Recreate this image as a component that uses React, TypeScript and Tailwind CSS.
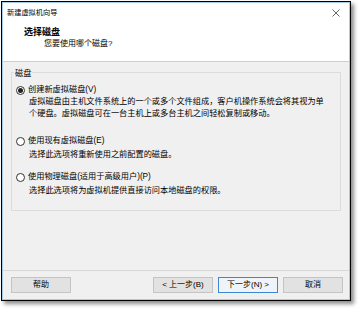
import React from "react";

const font = "font-['Liberation_Sans','Noto_Sans_CJK_SC',sans-serif]";

function Radio({ checked = false }: { checked?: boolean }) {
  return (
    <span className="flex h-[9px] w-[9px] shrink-0 items-center justify-center rounded-full border border-[#333] bg-white">
      {checked && <span className="h-[5px] w-[5px] rounded-full bg-[#222]" />}
    </span>
  );
}

function Option({
  label,
  checked,
  lines,
  descGap = "mt-0",
  className = "",
}: {
  label: string;
  checked?: boolean;
  lines: string[];
  descGap?: string;
  className?: string;
}) {
  return (
    <div className={className}>
      <div className="flex h-[12px] items-center gap-[3px] pl-[4px]">
        <Radio checked={checked} />
        <span className="leading-[12px]">{label}</span>
      </div>
      <div className={["pl-[17px]", descGap].join(" ")}>
        {lines.map((l) => (
          <div key={l} className="h-[12px] leading-[12px] whitespace-nowrap">
            {l}
          </div>
        ))}
      </div>
    </div>
  );
}

function Btn({
  children,
  primary = false,
  className = "",
}: React.PropsWithChildren<{ primary?: boolean; className?: string }>) {
  return (
    <div
      className={[
        "flex h-[16px] w-[60px] items-center justify-center border text-[8px] leading-none",
        primary
          ? "border-[#3c87d0] bg-[#eef4fa]"
          : "border-[#c4c4c4] bg-[#e2e2e2]",
        className,
      ].join(" ")}
    >
      {children}
    </div>
  );
}

export default function App() {
  return (
    <div className={["h-[309px] w-[359px] bg-white pl-[1px] pt-[1px] text-black", font].join(" ")}>
      <div className="h-[300px] w-[350px] border border-black shadow-[3px_3px_4px_rgba(0,0,0,0.45)]">
        <div className="flex h-full flex-col border border-[#a8cbe6]">
          {/* header */}
          <div className="h-[59px] border-b border-[#cfcfcf] bg-white">
            <div className="flex h-[20px] items-center justify-between pl-[4px] pr-[9px]">
              <span className="text-[7.2px]">新建虚拟机向导</span>
              <svg width="8" height="8" viewBox="0 0 8 8">
                <path d="M0.5 0.5 L7.5 7.5 M7.5 0.5 L0.5 7.5" stroke="#555" strokeWidth="0.9" />
              </svg>
            </div>
            <div className="mt-[3px] pl-[21px] text-[9px] font-bold leading-[12px]">选择磁盘</div>
            <div className="pl-[41px] text-[8px] leading-[12px]">您要使用哪个磁盘?</div>
          </div>

          {/* body */}
          <div className="flex flex-1 flex-col bg-[#f0f0f0] text-[8.2px]">
            <div className="relative mx-[8px] mt-[10px] border border-[#dcdcdc] pb-[13px] pt-[11px] pr-[4px]">
              <span className="absolute left-[2px] top-[-5px] bg-[#f0f0f0] px-[1px] leading-[12px]">磁盘</span>
              <Option
                label="创建新虚拟磁盘(V)"
                checked
                lines={[
                  "虚拟磁盘由主机文件系统上的一个或多个文件组成，客户机操作系统会将其视为单",
                  "个硬盘。虚拟磁盘可在一台主机上或多台主机之间轻松复制或移动。",
                ]}
              />
              <Option
                className="mt-[15px]"
                descGap="mt-[2px]"
                label="使用现有虚拟磁盘(E)"
                lines={["选择此选项将重新使用之前配置的磁盘。"]}
              />
              <Option
                className="mt-[10px]"
                descGap="mt-[2px]"
                label="使用物理磁盘(适用于高级用户)(P)"
                lines={["选择此选项将为虚拟机提供直接访问本地磁盘的权限。"]}
              />
            </div>

            <div className="mt-auto border-t border-[#d8d8d8]">
              <div className="flex items-center pb-[6px] pl-[8px] pr-[6px] pt-[6px]">
                <Btn className="w-[58px]">帮助</Btn>
                <div className="ml-auto flex gap-[5px]">
                  <Btn>&lt; 上一步(B)</Btn>
                  <Btn primary>下一步(N) &gt;</Btn>
                  <Btn>取消</Btn>
                </div>
              </div>
            </div>
          </div>
        </div>
      </div>
    </div>
  );
}
